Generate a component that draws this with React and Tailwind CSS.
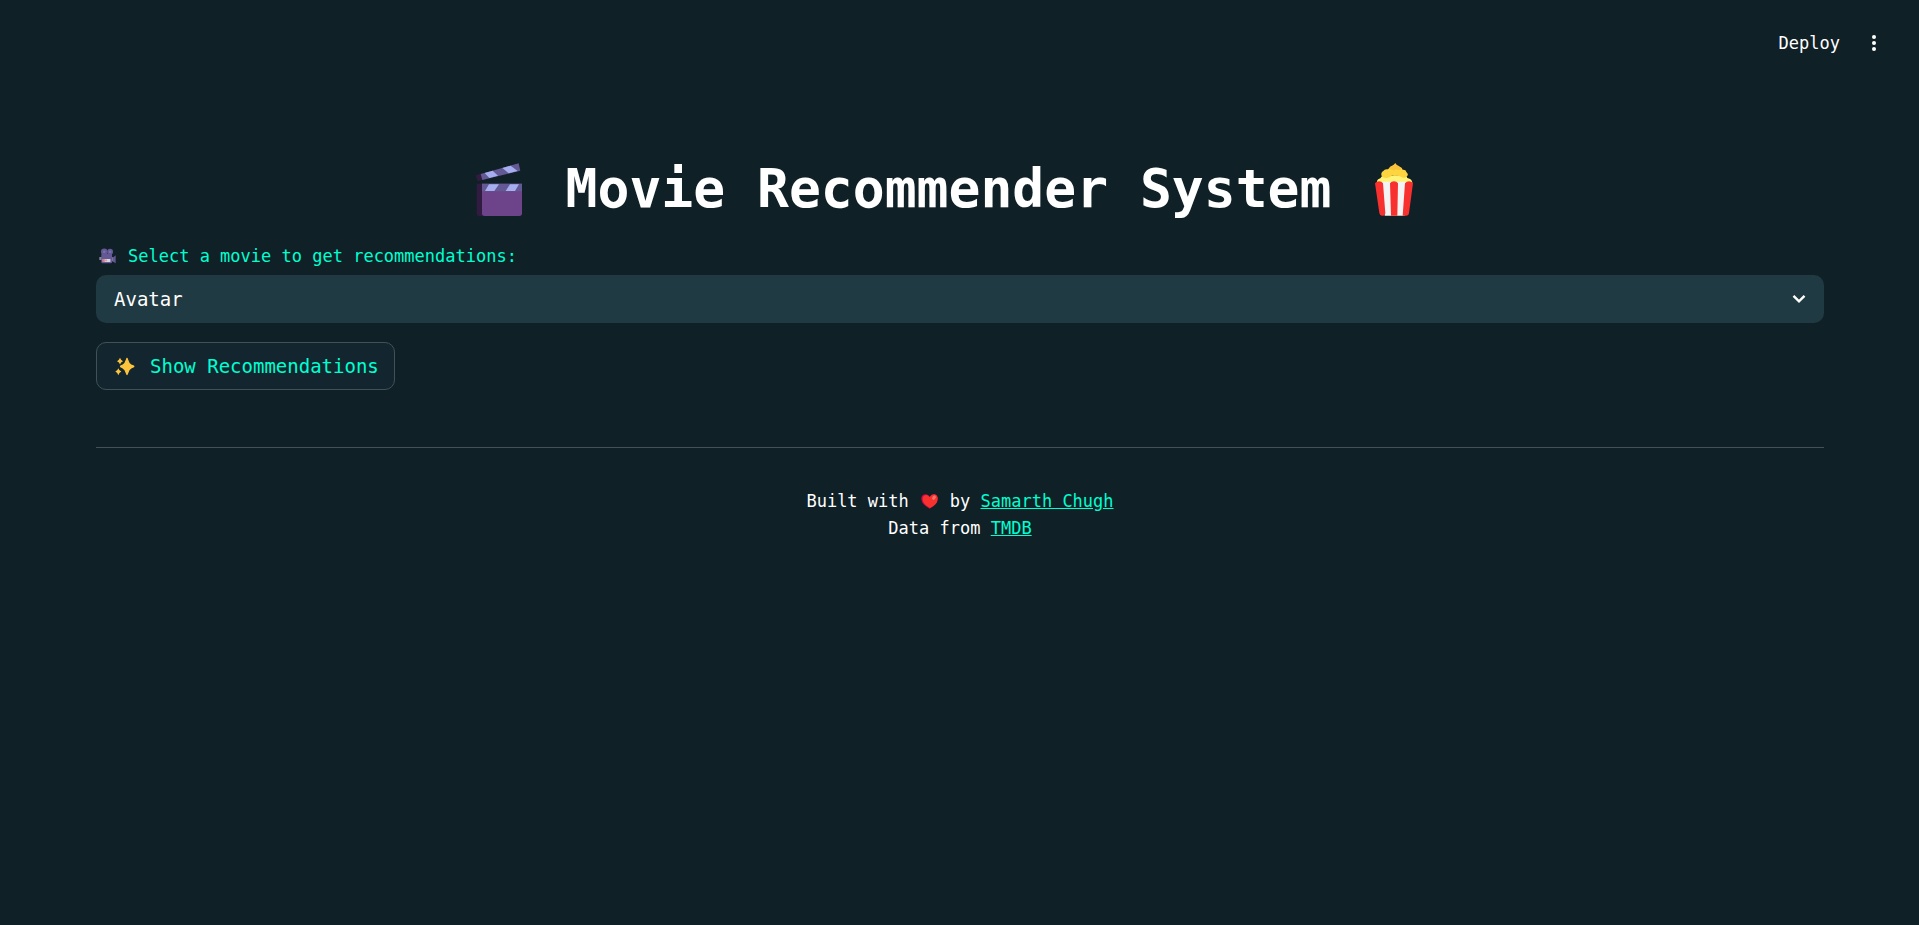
const MONO = "font-['DejaVu_Sans_Mono',monospace]";

function Clapper() {
  return (
    <svg viewBox="45 65 144 165" className="h-[55px] w-12 shrink-0" role="img" aria-label="Clapper board">
      <path d="M50 130H80V227H57Q50 227 50 220Z" fill="#321b41" />
      <path d="M66 130H186V219Q186 227 178 227H74Q66 227 66 219Z" fill="#6d4489" />
      <path d="M66 130H186V153H66Z" fill="#635994" />
      <path d="M87 132H117L103 152H75ZM150 132H177L165 152H137Z" fill="#a6aef0" />
      <path d="M47 105L68 99L74 117L53 123Z" fill="#321b41" />
      <path d="M62 101L176 69L181 91L67 119Z" fill="#635994" />
      <path d="M74 98L98 91L114 106L88 113ZM127 83L152 76L173 92L146 99Z" fill="#a6aef0" />
    </svg>
  );
}

function Popcorn() {
  return (
    <svg viewBox="102 66 120 165" className="h-[55px] w-10 shrink-0" role="img" aria-label="Popcorn">
      <path d="M111 130Q109 118 121 115Q124 106 134 107L188 106Q199 105 202 114Q217 117 217 130Z" fill="#fff478" />
      <path d="M126 110Q120 99 130 93Q134 86 144 88Q150 79 160 82H176Q185 79 188 89Q198 88 199 96Q207 103 201 109Q194 117 185 111Q173 105 163 108Q157 104 150 111Q137 118 126 110Z" fill="#fcd53f" />
      <path d="M149 88Q147 79 156 77Q161 75 166 69Q169 75 175 77Q184 80 182 89Q173 92 168 88Q162 94 158 89Z" fill="#f9c23c" />
      <path d="M126 125H200L194 227H134Z" fill="#f4f4f4" />
      <path d="M105 130Q110 124 117 124Q125 124 129 130L136 220Q136 227 130 227H126Q119 227 118 219ZM150 130Q154 124 162 124Q170 124 174 130L172 227H153ZM195 130Q200 124 207 124Q215 124 219 130L207 219Q206 227 198 227H188Z" fill="#f8312f" />
    </svg>
  );
}

function Camera() {
  return (
    <svg viewBox="26 26 52 48" className="h-4 w-[17px] shrink-0" role="img" aria-label="Movie camera">
      <path d="M27 53H35V62H27ZM64 54H70V66H64Z" fill="#8a8494" />
      <path d="M68 55L77 48V72L68 67Z" fill="#635994" />
      <rect x="33" y="43" width="33" height="29" rx="4" fill="#635994" />
      <circle cx="42" cy="37" r="10" fill="#635994" />
      <circle cx="60" cy="37" r="9" fill="#635994" />
      <circle cx="42" cy="37" r="4" fill="#7b6fae" />
      <circle cx="60" cy="37" r="4" fill="#7b6fae" />
      <rect x="37" y="59" width="24" height="9" rx="1" fill="#d8d4dc" />
      <path d="M39 59H43V68H39ZM46 61H49V66H46Z" fill="#e0566a" />
    </svg>
  );
}

function Sparkles() {
  return (
    <svg viewBox="104 378 60 56" className="h-[19px] w-5 shrink-0" role="img" aria-label="Sparkles">
      <g fill="#fcc43c">
        <path d="M140 380Q142 380 143 384Q147 397 153 400L161 403Q164 406 161 408L153 412Q147 415 143 428Q142 432 140 432Q138 432 137 428Q133 415 127 412L120 408Q117 406 120 403L127 400Q133 397 137 384Q138 380 140 380Z" />
        <path d="M119 380Q121 387 128 390Q121 393 119 400Q117 393 110 390Q117 387 119 380Z" />
        <path d="M114 411Q116 418 123 421Q116 424 114 432Q112 424 105 421Q112 418 114 411Z" />
      </g>
    </svg>
  );
}

function Heart() {
  return (
    <svg viewBox="48 25 51 45" className="h-[15px] w-[17px] shrink-0" role="img" aria-label="love">
      <path d="M74 69Q50 57 49 41Q48 27 61 26Q69 26 74 33Q79 26 87 26Q99 27 98 41Q97 57 74 69Z" fill="#ca0b4a" />
      <path d="M75 67Q54 56 53 41Q53 29 63 28Q70 28 74 35Q79 26 87 26Q99 27 98 41Q97 57 75 67Z" fill="#f8312f" />
      <ellipse cx="87" cy="36" rx="5" ry="7" transform="rotate(35 87 36)" fill="#f37366" />
    </svg>
  );
}

export default function App() {
  return (
    <div className={`min-h-screen bg-[#0f2027] text-white ${MONO}`}>
      <header className="flex h-[86px] items-center justify-end gap-6 pr-9">
        <button type="button" className="text-[17px] leading-6">Deploy</button>
        <button type="button" aria-label="Main menu" className="flex w-[19px] justify-center">
          <svg viewBox="0 0 4 16" className="h-4 w-1" fill="currentColor">
            <circle cx="2" cy="2" r="2" />
            <circle cx="2" cy="8" r="2" />
            <circle cx="2" cy="14" r="2" />
          </svg>
        </button>
      </header>

      <main className="pt-[69px] pr-[95px] pl-24">
        <h1 className="flex items-center justify-center gap-[43px] pr-[31px] text-[53px] leading-[68px] font-bold">
          <Clapper />
          <span>Movie Recommender System</span>
          <Popcorn />
        </h1>

        <label htmlFor="movie" className="mt-[21px] flex h-6 items-center gap-3 pl-[3px] text-[17px] leading-6 text-[#00ffd0]">
          <Camera />
          <span>Select a movie to get recommendations:</span>
        </label>
        <div className="relative mt-[7px]">
          <select id="movie" className="block h-12 w-full appearance-none rounded-[10px] bg-[#203a43] pr-12 pl-[18px] text-[19px] leading-7 text-white">
            <option>Avatar</option>
          </select>
          <svg viewBox="0 0 14 10" className="pointer-events-none absolute top-[19px] right-[18px] h-[10px] w-[14px]" fill="none" stroke="currentColor" strokeWidth="2.4">
            <path d="M1.5 1.8L7 7.3L12.5 1.8" />
          </svg>
        </div>

        <button type="button" className="mt-[19px] flex h-12 items-center gap-[15px] rounded-[10px] border border-[#435157] bg-[#132630] pr-[15px] pl-[18px] text-[19px] leading-7 text-[#00ffd0]">
          <Sparkles />
          <span>Show Recommendations</span>
        </button>

        <hr className="mt-[57px] border-[#435157]" />

        <footer className="mt-10 flex flex-col items-center text-[17px] leading-[27px]">
          <p className="flex items-center gap-3">
            <span>Built with</span>
            <Heart />
            <span>by <a href="#author" className="text-[#00ffd0] underline">Samarth Chugh</a></span>
          </p>
          <p>Data from <a href="#tmdb" className="text-[#00ffd0] underline">TMDB</a></p>
        </footer>
      </main>
    </div>
  );
}
